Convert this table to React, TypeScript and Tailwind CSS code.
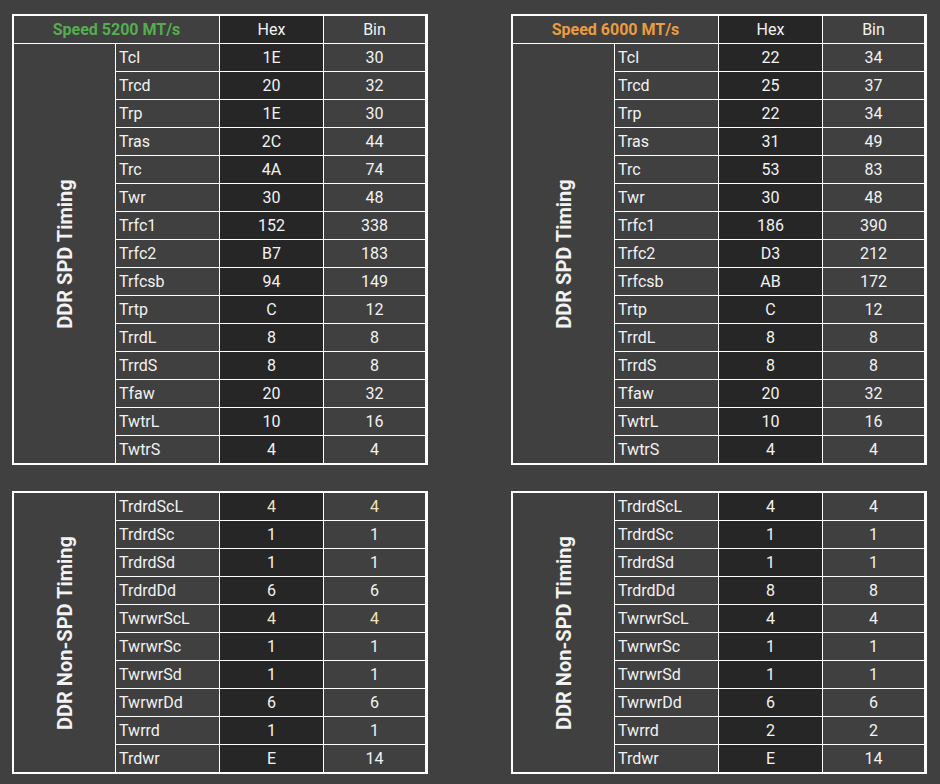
import React from "react";

type Row = [string, string, string, boolean?];

const spd5200: Row[] = [
  ["Tcl", "1E", "30"],
  ["Trcd", "20", "32"],
  ["Trp", "1E", "30"],
  ["Tras", "2C", "44"],
  ["Trc", "4A", "74"],
  ["Twr", "30", "48"],
  ["Trfc1", "152", "338"],
  ["Trfc2", "B7", "183"],
  ["Trfcsb", "94", "149"],
  ["Trtp", "C", "12"],
  ["TrrdL", "8", "8"],
  ["TrrdS", "8", "8"],
  ["Tfaw", "20", "32"],
  ["TwtrL", "10", "16"],
  ["TwtrS", "4", "4"],
];

const spd6000: Row[] = [
  ["Tcl", "22", "34"],
  ["Trcd", "25", "37"],
  ["Trp", "22", "34"],
  ["Tras", "31", "49"],
  ["Trc", "53", "83"],
  ["Twr", "30", "48"],
  ["Trfc1", "186", "390"],
  ["Trfc2", "D3", "212"],
  ["Trfcsb", "AB", "172"],
  ["Trtp", "C", "12"],
  ["TrrdL", "8", "8"],
  ["TrrdS", "8", "8"],
  ["Tfaw", "20", "32"],
  ["TwtrL", "10", "16"],
  ["TwtrS", "4", "4"],
];

const non5200: Row[] = [
  ["TrdrdScL", "4", "4", true],
  ["TrdrdSc", "1", "1"],
  ["TrdrdSd", "1", "1"],
  ["TrdrdDd", "6", "6"],
  ["TwrwrScL", "4", "4", true],
  ["TwrwrSc", "1", "1"],
  ["TwrwrSd", "1", "1"],
  ["TwrwrDd", "6", "6"],
  ["Twrrd", "1", "1"],
  ["Trdwr", "E", "14"],
];

const non6000: Row[] = [
  ["TrdrdScL", "4", "4"],
  ["TrdrdSc", "1", "1"],
  ["TrdrdSd", "1", "1"],
  ["TrdrdDd", "8", "8"],
  ["TwrwrScL", "4", "4"],
  ["TwrwrSc", "1", "1"],
  ["TwrwrSd", "1", "1"],
  ["TwrwrDd", "6", "6"],
  ["Twrrd", "2", "2"],
  ["Trdwr", "E", "14"],
];

function TimingTable({
  label,
  rows,
  speed,
  speedClass,
}: {
  label: string;
  rows: Row[];
  speed?: string;
  speedClass?: string;
}) {
  return (
    <div className="w-[416px] border-2 border-white bg-white">
      <div className="grid grid-cols-[101px_103px_103px_101px] auto-rows-[27px] gap-px">
        {speed && (
          <>
            <div className={`col-span-2 bg-[#404040] flex items-center justify-center font-bold text-[16px] ${speedClass}`}>
              {speed}
            </div>
            <div className="bg-[#262626] flex items-center justify-center">Hex</div>
            <div className="bg-[#404040] flex items-center justify-center">Bin</div>
          </>
        )}
        <div
          className="bg-[#404040] flex items-center justify-center overflow-hidden"
          style={{ gridRow: `span ${rows.length}` }}
        >
          <span className="-rotate-90 whitespace-nowrap font-bold text-[20px] text-[#f2f2f2]">{label}</span>
        </div>
        {rows.map(([name, hex, bin, warm]) => (
          <React.Fragment key={name}>
            <div className="bg-[#404040] flex items-center pl-[3px]">{name}</div>
            <div className={`bg-[#262626] flex items-center justify-center ${warm ? "text-[#efe4b8]" : ""}`}>{hex}</div>
            <div className={`bg-[#404040] flex items-center justify-center ${warm ? "text-[#efe4b8]" : ""}`}>{bin}</div>
          </React.Fragment>
        ))}
      </div>
    </div>
  );
}

export default function App() {
  return (
    <div className="w-[940px] h-[784px] bg-[#404040] text-[#f2f2f2] text-[16px] font-['Roboto',sans-serif] pl-[12px] pt-[14px]">
      <div className="grid grid-cols-[416px_416px] gap-x-[83px] gap-y-[26px] items-start">
        <TimingTable label="DDR SPD Timing" rows={spd5200} speed="Speed 5200 MT/s" speedClass="text-[#55ad4f]" />
        <TimingTable label="DDR SPD Timing" rows={spd6000} speed="Speed 6000 MT/s" speedClass="text-[#eb9c3e]" />
        <TimingTable label="DDR Non-SPD Timing" rows={non5200} />
        <TimingTable label="DDR Non-SPD Timing" rows={non6000} />
      </div>
    </div>
  );
}
